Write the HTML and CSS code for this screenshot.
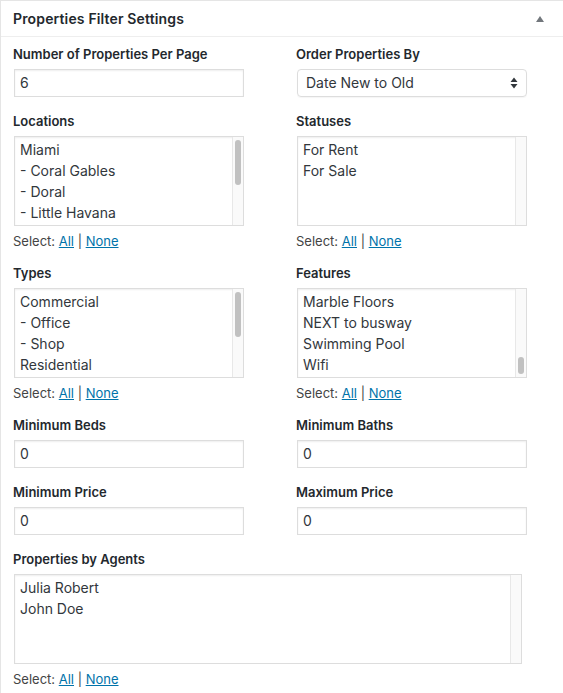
FILE: index.html
```html
<!DOCTYPE html>
<html>
<head>
<meta charset="utf-8">
<link rel="stylesheet" href="styles.css">
</head>
<body>
<div class="postbox">
  <div class="postbox-header">
    <h2 class="postbox-title">Properties Filter Settings</h2>
    <span class="toggle-arrow"></span>
  </div>
  <div class="inside">
    <div class="grid">
      <div class="field">
        <label class="field-label">Number of Properties Per Page</label>
        <div class="text-input">6</div>
      </div>
      <div class="field">
        <label class="field-label">Order Properties By</label>
        <div class="select-input">
          <span>Date New to Old</span>
          <svg class="select-arrows" width="8" height="12" viewBox="0 0 8 12"><path d="M4 0.5 L7.5 5 L0.5 5 Z M4 11.5 L0.5 7 L7.5 7 Z" fill="#32373c"/></svg>
        </div>
      </div>

      <div class="field">
        <label class="field-label">Locations</label>
        <div class="listbox">
          <ul class="options">
            <li>Miami</li>
            <li>- Coral Gables</li>
            <li>- Doral</li>
            <li>- Little Havana</li>
          </ul>
          <div class="scroll-track"><div class="thumb thumb-top"></div></div>
        </div>
        <p class="select-links">Select: <a href="#">All</a> | <a href="#">None</a></p>
      </div>
      <div class="field">
        <label class="field-label">Statuses</label>
        <div class="listbox">
          <ul class="options">
            <li>For Rent</li>
            <li>For Sale</li>
          </ul>
          <div class="scroll-track"></div>
        </div>
        <p class="select-links">Select: <a href="#">All</a> | <a href="#">None</a></p>
      </div>

      <div class="field">
        <label class="field-label">Types</label>
        <div class="listbox">
          <ul class="options">
            <li>Commercial</li>
            <li>- Office</li>
            <li>- Shop</li>
            <li>Residential</li>
          </ul>
          <div class="scroll-track"><div class="thumb thumb-top"></div></div>
        </div>
        <p class="select-links">Select: <a href="#">All</a> | <a href="#">None</a></p>
      </div>
      <div class="field">
        <label class="field-label">Features</label>
        <div class="listbox">
          <ul class="options">
            <li>Marble Floors</li>
            <li>NEXT to busway</li>
            <li>Swimming Pool</li>
            <li>Wifi</li>
          </ul>
          <div class="scroll-track track-end"><div class="thumb thumb-bottom"></div></div>
        </div>
        <p class="select-links">Select: <a href="#">All</a> | <a href="#">None</a></p>
      </div>

      <div class="field">
        <label class="field-label">Minimum Beds</label>
        <div class="text-input">0</div>
      </div>
      <div class="field">
        <label class="field-label">Minimum Baths</label>
        <div class="text-input">0</div>
      </div>

      <div class="field">
        <label class="field-label">Minimum Price</label>
        <div class="text-input">0</div>
      </div>
      <div class="field">
        <label class="field-label">Maximum Price</label>
        <div class="text-input">0</div>
      </div>

      <div class="field field-wide">
        <label class="field-label">Properties by Agents</label>
        <div class="listbox listbox-wide">
          <ul class="options">
            <li>Julia Robert</li>
            <li>John Doe</li>
          </ul>
          <div class="scroll-track"></div>
        </div>
        <p class="select-links">Select: <a href="#">All</a> | <a href="#">None</a></p>
      </div>
    </div>
  </div>
</div>
</body>
</html>
```

FILE: styles.css
```css
* { box-sizing: border-box; }

html, body {
  margin: 0;
  padding: 0;
  background: #fff;
}

body {
  font-family: Inter, "Noto Sans", "Liberation Sans", sans-serif;
  color: #32373c;
  font-size: 13px;
}

.postbox {
  border-top: 1px solid #e5e5e5;
  border-left: 1px solid #e5e5e5;
  background: #fff;
  min-height: 693px;
}

.postbox-header {
  display: flex;
  align-items: center;
  justify-content: space-between;
  height: 36px;
  padding: 0 13px 0 12px;
  border-bottom: 1px solid #eee;
}

.postbox-title {
  margin: 0;
  font-size: 14px;
  font-weight: 600;
  color: #23282d;
  line-height: 20px;
  letter-spacing: 0.15px;
}

.toggle-arrow {
  width: 0;
  height: 0;
  border-left: 4px solid transparent;
  border-right: 4px solid transparent;
  border-bottom: 6px solid #72777c;
  margin-right: 6px;
}

.inside {
  padding: 7px 12px 0 12px;
}

.grid {
  display: grid;
  grid-template-columns: 283px 283px;
  row-gap: 14px;
}

.field-wide {
  grid-column: 1 / span 2;
}

.field-label {
  display: block;
  font-weight: 600;
  font-size: 13px;
  line-height: 20px;
  color: #23282d;
  margin-bottom: 5px;
}

.text-input {
  width: 230px;
  height: 28px;
  margin-left: 1px;
  border: 1px solid #ddd;
  box-shadow: inset 0 1px 2px rgba(0,0,0,.07);
  padding: 0 5px;
  font-size: 14px;
  line-height: 26px;
  color: #32373c;
}

.select-input {
  width: 230px;
  height: 28px;
  margin-left: 1px;
  border: 1px solid #ddd;
  border-radius: 4px;
  box-shadow: 0 1px 1px rgba(0,0,0,.04);
  padding: 0 8px 0 8px;
  font-size: 14px;
  line-height: 26px;
  display: flex;
  align-items: center;
  justify-content: space-between;
  color: #32373c;
}

.select-arrows { display: block; }

.listbox {
  display: flex;
  width: 230px;
  height: 90px;
  margin-left: 1px;
  border: 1px solid #ddd;
  box-shadow: inset 0 1px 2px rgba(0,0,0,.07);
  background: #fff;
}

.listbox-wide {
  width: 508px;
}

.options {
  flex: 1;
  list-style: none;
  margin: 0;
  padding: 2px 5px 0 5px;
  font-size: 14px;
  line-height: 21px;
  color: #32373c;
  overflow: hidden;
}

.scroll-track {
  width: 11px;
  flex: none;
  background: #fafafa;
  border-left: 1px solid #e8e8e8;
  display: flex;
  flex-direction: column;
  padding: 3px 2px;
}

.track-end {
  justify-content: flex-end;
}

.thumb {
  width: 6px;
  border-radius: 3px;
  background: #c1c1c1;
}

.thumb-top { height: 45px; }
.thumb-bottom { height: 17px; }

.select-links {
  margin: 6px 0 -1px 0;
  font-size: 13px;
  line-height: 18px;
  color: #444;
}

.select-links a {
  color: #0073aa;
  text-decoration: underline;
}
```
